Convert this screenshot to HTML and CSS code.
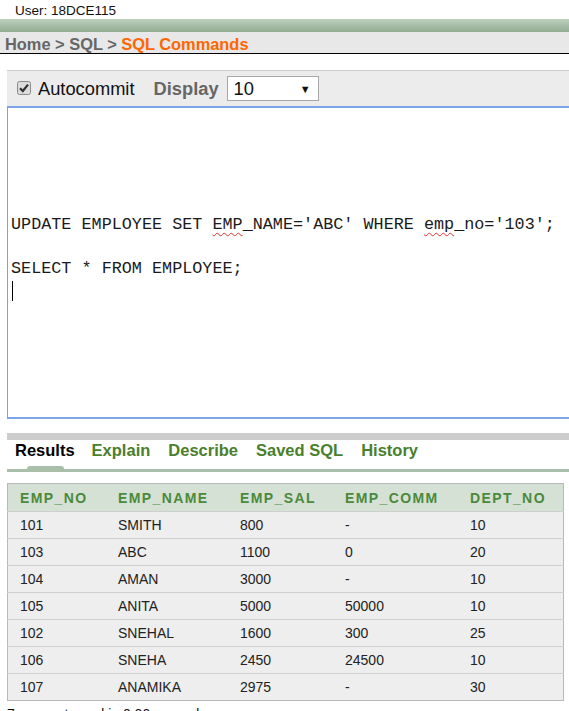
FILE: index.html
```html
<!DOCTYPE html>
<html>
<head>
<meta charset="utf-8">
<link rel="stylesheet" href="styles.css">
</head>
<body>
<div class="user">User: 18DCE115</div>
<div class="greenbar"></div>
<div class="crumbs"><span class="gray">Home &gt; SQL &gt; </span><span class="orange">SQL Commands</span></div>
<div class="main">
  <div class="toolbar">
    <span class="chk"><svg width="14" height="14" viewBox="0 0 14 14"><rect x="0.5" y="0.5" width="13" height="13" rx="2" fill="#dcdcdc" stroke="#8a8a8a"/><path d="M3 7.2 L5.8 10 L11 3.6" fill="none" stroke="#333" stroke-width="2.2"/></svg></span>
    <span class="auto">Autocommit</span>
    <span class="disp">Display</span>
    <span class="sel"><span>10</span><span class="arr">▼</span></span>
  </div>
  <div class="editor">
    <div class="code">UPDATE EMPLOYEE SET <span class="sp">EMP</span>_NAME='ABC' WHERE <span class="sp">emp</span>_no='103';</div>
    <div class="code blank">&nbsp;</div>
    <div class="code">SELECT * FROM EMPLOYEE;</div>
    <div class="code"><span class="caret"></span></div>
  </div>
  <div class="graybar"></div>
  <div class="tabs">
    <span class="tab active">Results<span class="bump"></span></span>
    <span class="tab">Explain</span>
    <span class="tab">Describe</span>
    <span class="tab">Saved SQL</span>
    <span class="tab">History</span>
  </div>
  <table class="res">
    <thead>
      <tr><th class="c1">EMP_NO</th><th class="c2">EMP_NAME</th><th class="c3">EMP_SAL</th><th class="c4">EMP_COMM</th><th class="c5">DEPT_NO</th></tr>
    </thead>
    <tbody>
      <tr><td>101</td><td>SMITH</td><td>800</td><td>-</td><td>10</td></tr>
      <tr><td>103</td><td>ABC</td><td>1100</td><td>0</td><td>20</td></tr>
      <tr><td>104</td><td>AMAN</td><td>3000</td><td>-</td><td>10</td></tr>
      <tr><td>105</td><td>ANITA</td><td>5000</td><td>50000</td><td>10</td></tr>
      <tr><td>102</td><td>SNEHAL</td><td>1600</td><td>300</td><td>25</td></tr>
      <tr><td>106</td><td>SNEHA</td><td>2450</td><td>24500</td><td>10</td></tr>
      <tr><td>107</td><td>ANAMIKA</td><td>2975</td><td>-</td><td>30</td></tr>
    </tbody>
  </table>
  <div class="footer">7 rows returned in 0.00 seconds</div>
</div>
</body>
</html>
```
FILE: styles.css
```css
html, body {
  margin: 0;
  padding: 0;
  background: #fff;
  font-family: "Liberation Sans", Arial, sans-serif;
  overflow: hidden;
}
.user {
  height: 17px;
  padding-top: 2px;
  line-height: 17px;
  font-size: 13.5px;
  padding-left: 15px;
  color: #111;
}
.greenbar {
  height: 13px;
  background: linear-gradient(#bdd0bd, #93ab93);
}
.crumbs {
  height: 21px;
  line-height: 24px;
  background: #e7e8e7;
  border-bottom: 1px solid #000;
  font-size: 16.4px;
  font-weight: bold;
  padding-left: 5px;
}
.gray { color: #666; }
.orange { color: #ff6600; }
.main {
  padding-left: 7px;
  margin-top: 16px;
}
.toolbar {
  height: 35px;
  background: #ececec;
  border-top: 1px solid #cfcfcf;
  display: flex;
  align-items: center;
  font-size: 18.3px;
}
.chk {
  display: flex;
  margin-left: 10px;
  margin-right: 7px;
  margin-top: -2px;
}
.auto { color: #111; }
.disp {
  color: #666;
  font-weight: bold;
  margin-left: 19px;
  margin-right: 8px;
}
.sel {
  box-sizing: border-box;
  width: 92px;
  height: 25px;
  background: #fff;
  border: 1px solid #a8a8a8;
  display: flex;
  align-items: center;
  justify-content: space-between;
  padding: 0 7px 0 6px;
  color: #111;
}
.arr {
  font-size: 11px;
  color: #111;
}
.editor {
  box-sizing: border-box;
  height: 313px;
  border-top: 2px solid #7ba5e8;
  border-bottom: 2px solid #7ba5e8;
  border-left: 1px solid #7ba5e8;
  padding-top: 106px;
  padding-left: 3px;
}
.code {
  font-family: "Liberation Mono", "DejaVu Sans Mono", monospace;
  font-size: 16.8px;
  line-height: 22px;
  height: 22px;
  color: #1a1a1a;
  white-space: pre;
}
.sp {
  text-decoration: underline wavy #e03030;
  text-decoration-thickness: 1px;
  text-underline-offset: 3px;
}
.caret {
  display: inline-block;
  width: 1px;
  height: 20px;
  background: #000;
  vertical-align: middle;
  margin-left: 1px;
}
.graybar {
  height: 7px;
  background: #cccccc;
  margin-top: 14px;
}
.tabs {
  box-sizing: border-box;
  height: 32px;
  padding-top: 1px;
  border-bottom: 3px solid #a9bfa9;
  display: flex;
  align-items: flex-start;
  font-size: 16.5px;
  line-height: 18px;
  font-weight: bold;
  padding-left: 8px;
}
.tab {
  color: #4a7f2c;
  margin-right: 18px;
  position: relative;
}
.tab.active { color: #000; margin-right: 17px; }
.bump {
  position: absolute;
  left: 12px;
  width: 37px;
  top: 25px;
  height: 4px;
  background: #a9bfa9;
  border-radius: 3px 3px 0 0;
}
.res {
  margin-top: 11px;
  width: 557px;
  border-collapse: collapse;
  border: 1px solid #b9b9b9;
  font-size: 14px;
}
.res th {
  background: #d5e1d5;
  color: #4b8a3b;
  font-weight: bold;
  letter-spacing: 1.4px;
  text-align: left;
  height: 27px;
  padding: 0 0 0 12px;
}
.res td {
  background: #eeeeee;
  color: #222;
  height: 26px;
  padding: 0 0 0 12px;
  border-top: 1px solid #cfcfcf;
}
.res .c1 { width: 86px; }
.res .c2 { width: 110px; }
.res .c3 { width: 93px; }
.res .c4 { width: 113px; }
.footer {
  font-size: 14px;
  margin-top: 5px;
  color: #111;
}
```
